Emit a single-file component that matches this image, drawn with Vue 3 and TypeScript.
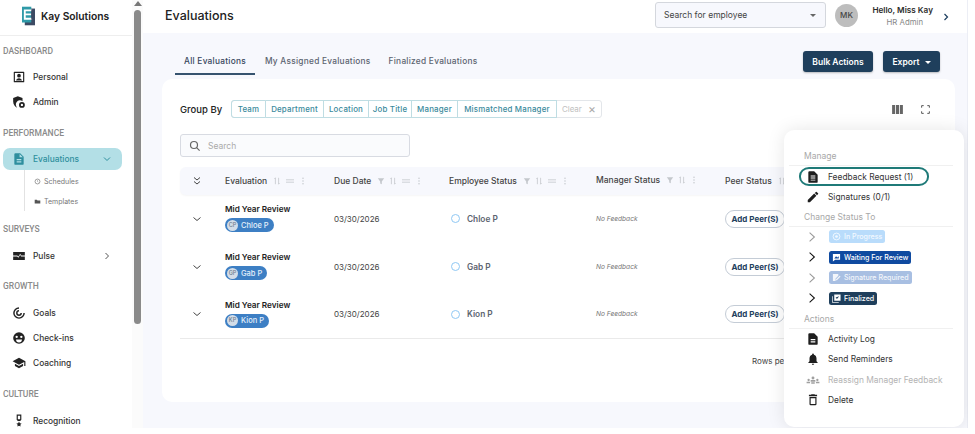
<script setup lang="ts">
const icons: Record<string, string> = {
  personal: 'M4 3h16a1 1 0 0 1 1 1v16a1 1 0 0 1-1 1H4a1 1 0 0 1-1-1V4a1 1 0 0 1 1-1zm1 2v14h14V5H5zm7 1.500a3.200 3.200 0 1 1 0 6.400 3.200 3.200 0 0 1 0-6.400zM7 18c0-2.400 2.500-4 5-4s5 1.600 5 4H7z',
  admin: 'M10 2l8 3v5.500a6.500 6.500 0 0 0-8.700 11.300C5.500 20.500 2 16.500 2 11V5l8-3zM17 12a5 5 0 1 1 0 10 5 5 0 0 1 0-10zm0 3a2 2 0 1 0 0 4 2 2 0 0 0 0-4z',
  doc: 'M14 2H6a2 2 0 0 0-2 2v16a2 2 0 0 0 2 2h12a2 2 0 0 0 2-2V8l-6-6zm2 16H8v-2h8v2zm0-4H8v-2h8v2zm-3-5V3.500L18.500 9H13z',
  pulse: 'M2 5h20v6h-6l-2-3-3 5-2-2H2V5zm0 8h7l2 2 3-5 1.500 3H22v6H2v-6z',
  goals: 'M12 2a10 10 0 1 0 10 10h-2.500A7.500 7.500 0 1 1 12 4.500V2zm0 5a5 5 0 1 0 5 5h-2.500A2.500 2.500 0 1 1 12 9.500V7z',
  checkins: 'M12 2a10 10 0 1 1 0 20 10 10 0 0 1 0-20zM8 8a2 2 0 1 0 0 4 2 2 0 0 0 0-4zm8 0a2 2 0 1 0 0 4 2 2 0 0 0 0-4zM7 14.500h10a5 5 0 0 1-10 0z',
  coaching: 'M5 13.180v4L12 21l7-3.820v-4L12 17l-7-3.820zM12 3L1 9l11 6 9-4.910V17h2V9L12 3z',
  recognition: 'M8 1h8v9l-2 2h-4l-2-2V1zm2 2v6h4V3h-4zM12 13l1.500 3 3 .4-2.200 2.100.5 3L12 20l-2.800 1.500.5-3-2.200-2.100 3-.4L12 13z',
  feedback: 'M14 2H6a2 2 0 0 0-2 2v16a2 2 0 0 0 2 2h12a2 2 0 0 0 2-2V8l-6-6zm2 16H8v-1.500h8V18zm0-3.500H8V13h8v1.500zm0-3.500H8V9.500h8V11z',
  pencil: 'M3 17.250V21h3.750L17.810 9.940l-3.750-3.750L3 17.250zM20.710 7.040a1 1 0 0 0 0-1.410l-2.340-2.340a1 1 0 0 0-1.410 0l-1.830 1.830 3.750 3.750 1.830-1.830z',
  log: 'M14 2H6a2 2 0 0 0-2 2v16a2 2 0 0 0 2 2h12a2 2 0 0 0 2-2V8l-6-6zm2 16H8v-2h8v2zm0-4H8v-2h8v2z',
  bell: 'M12 22c1.100 0 2-.9 2-2h-4a2 2 0 0 0 2 2zm6-6v-5c0-3.070-1.630-5.640-4.500-6.320V4a1.500 1.500 0 0 0-3 0v.68C7.640 5.360 6 7.920 6 11v5l-2 2v1h16v-1l-2-2z',
  people: 'M12 6a2.500 2.500 0 1 1 0 5 2.500 2.500 0 0 1 0-5zM8 12h8v3H8v-3zM4.500 10a2 2 0 1 1 0 4 2 2 0 0 1 0-4zM1 15h6v2.500H1V15zM19.500 10a2 2 0 1 1 0 4 2 2 0 0 1 0-4zM17 15h6v2.500h-6V15zM9 16h6v2.500H9V16z',
  trash: 'M6 19a2 2 0 0 0 2 2h8a2 2 0 0 0 2-2V7H6v12zm2-10h8v10H8V9zM19 3h-3.500l-1-1h-5l-1 1H5v2.500h14V3z',
}

interface NavItem {
  label: string
  icon: string
  arrow?: boolean
  active?: boolean
  subs?: string[]
}

const navGroups: { title: string; items: NavItem[] }[] = [
  { title: 'DASHBOARD', items: [{ label: 'Personal', icon: 'personal' }, { label: 'Admin', icon: 'admin' }] },
  { title: 'PERFORMANCE', items: [{ label: 'Evaluations', icon: 'doc', active: true, subs: ['Schedules', 'Templates'] }] },
  { title: 'SURVEYS', items: [{ label: 'Pulse', icon: 'pulse', arrow: true }] },
  { title: 'GROWTH', items: [{ label: 'Goals', icon: 'goals' }, { label: 'Check-ins', icon: 'checkins' }, { label: 'Coaching', icon: 'coaching' }] },
  { title: 'CULTURE', items: [{ label: 'Recognition', icon: 'recognition' }] },
]

const tabs = ['All Evaluations', 'My Assigned Evaluations', 'Finalized Evaluations']
const groupBy = ['Team', 'Department', 'Location', 'Job Title', 'Manager', 'Mismatched Manager']

const columns = [
  { label: 'Evaluation', filter: false, lines: true },
  { label: 'Due Date', filter: true, lines: true },
  { label: 'Employee Status', filter: true, lines: true },
  { label: 'Manager Status', filter: true, lines: false },
  { label: 'Peer Status', filter: false, lines: false },
]

const rows = [
  { name: 'Chloe P', initials: 'CP' },
  { name: 'Gab P', initials: 'GP' },
  { name: 'Kion P', initials: 'KP' },
]

const statuses = [
  { label: 'In Progress', cls: 'progress', dim: true },
  { label: 'Waiting For Review', cls: 'waiting', dim: false },
  { label: 'Signature Required', cls: 'signature', dim: true },
  { label: 'Finalized', cls: 'finalized', dim: false },
]

const actions = [
  { label: 'Activity Log', icon: 'log', off: false },
  { label: 'Send Reminders', icon: 'bell', off: false },
  { label: 'Reassign Manager Feedback', icon: 'people', off: true },
  { label: 'Delete', icon: 'trash', off: false },
]
</script>

<template>
  <div class="shell">
    <aside class="sidebar">
      <div class="brand">
        <svg class="logo" viewBox="0 0 14 20">
          <rect x="3" y="2" width="11" height="18" fill="#3d4a63" />
          <rect x="0" y="0" width="10" height="17" fill="#2f9aa8" />
          <path d="M2 3h9v1.800H4v2.600h6v1.800H4v2.600h7V14H2z" fill="#fff" />
          <path d="M10 3h2v11h-2z" fill="#3d4a63" />
        </svg>
        <span>Kay Solutions</span>
      </div>
      <nav class="nav">
        <section v-for="group in navGroups" :key="group.title" class="group">
          <h4>{{ group.title }}</h4>
          <template v-for="item in group.items" :key="item.label">
            <div class="nav-item" :class="{ active: item.active }">
              <svg class="nav-icon" viewBox="0 0 24 24"><path :d="icons[item.icon]" fill-rule="evenodd" /></svg>
              <span class="nav-label">{{ item.label }}</span>
              <svg v-if="item.active" class="caret" viewBox="0 0 10 10"><path d="M2 3.500l3 3 3-3" /></svg>
              <svg v-if="item.arrow" class="caret" viewBox="0 0 10 10"><path d="M3.500 2l3 3-3 3" /></svg>
            </div>
            <div v-if="item.subs" class="subs">
              <div class="sub">
                <svg viewBox="0 0 10 10"><circle cx="5" cy="5" r="3.500" fill="none" stroke="#777" /><path d="M5 3v2l1.300 1" fill="none" stroke="#777" stroke-width=".7" /></svg>
                {{ item.subs[0] }}
              </div>
              <div class="sub">
                <svg viewBox="0 0 10 10"><path d="M1 2.500h3l1 1h4v4.500H1z" fill="#555" /></svg>
                {{ item.subs[1] }}
              </div>
            </div>
          </template>
        </section>
      </nav>
    </aside>

    <div class="scrollbar">
      <i class="arrow-up"></i>
      <i class="thumb"></i>
    </div>

    <main class="main">
      <header class="topbar">
        <h1>Evaluations</h1>
        <div class="employee-select">
          <span>Search for employee</span>
          <i class="tri"></i>
        </div>
        <div class="avatar">MK</div>
        <div class="hello">
          <strong>Hello, Miss Kay</strong>
          <span>HR Admin</span>
        </div>
        <svg class="hello-arrow" viewBox="0 0 10 10"><path d="M3.500 2l3 3-3 3" /></svg>
      </header>

      <div class="content">
        <div class="tabbar">
          <div v-for="(tab, i) in tabs" :key="tab" class="tab" :class="{ current: i === 0 }">{{ tab }}</div>
          <div class="tab-actions">
            <button class="btn bulk">Bulk Actions</button>
            <button class="btn export">Export <i class="tri white"></i></button>
          </div>
        </div>

        <div class="card">
          <div class="group-row">
            <span class="group-title">Group By</span>
            <div class="group-btns">
              <span v-for="g in groupBy" :key="g" class="group-btn">{{ g }}</span>
              <span class="group-clear">Clear <b>×</b></span>
            </div>
            <div class="view-tools">
              <svg class="tool-cols" viewBox="0 0 12 10"><path d="M0 0h3.400v10H0zM4.300 0h3.400v10H4.300zM8.600 0H12v10H8.600z" /></svg>
              <svg class="tool-full" viewBox="0 0 10 10"><path d="M.7 3V.7H3M7 .7h2.300V3M9.300 7v2.300H7M3 9.300H.7V7" /></svg>
            </div>
          </div>

          <div class="search">
            <svg viewBox="0 0 12 12"><circle cx="5" cy="5" r="3.500" /><path d="M7.600 7.600l3 3" /></svg>
            <span>Search</span>
          </div>

          <div class="table">
            <div class="thead trow">
              <div class="cell-expand">
                <svg class="collapse" viewBox="0 0 10 10"><path d="M2 1.500l3 2.500 3-2.500M2 5.500l3 2.500 3-2.500" /></svg>
              </div>
              <div v-for="col in columns" :key="col.label" class="th" :class="{ raised: col.label === 'Manager Status' }">
                <span>{{ col.label }}</span>
                <svg v-if="col.filter" class="th-icon" viewBox="0 0 10 10"><path d="M1 1.500h8L6 5.500V9L4 8V5.500z" fill="#c4c7cc" /></svg>
                <svg class="th-icon" viewBox="0 0 10 10"><path d="M3 1v8M1.800 2.500L3 1M7 9V1M8.200 7.500L7 9" fill="none" stroke="#c4c7cc" /></svg>
                <svg v-if="col.lines" class="th-icon wide" viewBox="0 0 12 10"><path d="M1 3.500h10M1 6.500h10" fill="none" stroke="#c4c7cc" /></svg>
                <svg v-if="col.label !== 'Peer Status'" class="th-icon" viewBox="0 0 10 10"><circle cx="5" cy="1.500" r=".9" fill="#c4c7cc" /><circle cx="5" cy="5" r=".9" fill="#c4c7cc" /><circle cx="5" cy="8.500" r=".9" fill="#c4c7cc" /></svg>
              </div>
            </div>
            <div v-for="row in rows" :key="row.name" class="tbody trow">
              <div class="cell-expand">
                <svg class="expand" viewBox="0 0 10 10"><path d="M1.500 3.500L5 6.500l3.500-3" /></svg>
              </div>
              <div class="td eval">
                <strong>Mid Year Review</strong>
                <span class="person-chip"><i>{{ row.initials }}</i>{{ row.name }}</span>
              </div>
              <div class="td date">03/30/2026</div>
              <div class="td emp"><i class="ring"></i>{{ row.name }}</div>
              <div class="td none">No Feedback</div>
              <div class="td"><button class="add-peer">Add Peer(S)</button></div>
            </div>
          </div>
          <div class="pager">Rows per page</div>
        </div>
      </div>

      <div class="popover">
        <h5>Manage</h5>
        <div class="pop-item circled">
          <svg class="pop-icon" viewBox="0 0 24 24"><path :d="icons.feedback" fill-rule="evenodd" /></svg>
          Feedback Request (1)
        </div>
        <div class="pop-item">
          <svg class="pop-icon" viewBox="0 0 24 24"><path :d="icons.pencil" /></svg>
          Signatures (0/1)
        </div>
        <h5>Change Status To</h5>
        <div v-for="s in statuses" :key="s.label" class="status-row">
          <svg class="status-arrow" :class="{ dim: s.dim }" viewBox="0 0 10 14"><path d="M2 1.500L8 7l-6 5.500" /></svg>
          <span class="status-chip" :class="s.cls">
            <svg viewBox="0 0 10 10">
              <template v-if="s.cls === 'progress'"><circle cx="5" cy="5" r="3.800" fill="none" stroke="currentColor" /><circle cx="5" cy="5" r="1.500" fill="currentColor" /></template>
              <template v-else-if="s.cls === 'waiting'"><path d="M1 1h8v6.500H3.500L1 9.500zM2.500 6l2-2.500 1.500 1.500 1.500-1.500V6z" fill="currentColor" fill-rule="evenodd" /></template>
              <template v-else-if="s.cls === 'signature'"><path d="M1 1h6v2L4 6v3H1zM8.500 3l1 1-4 4h-1V7z" fill="currentColor" /></template>
              <template v-else><path d="M2.500 .5h7v7h-7zM4 4l1.500 1.500L8 2.500" fill="currentColor" fill-rule="evenodd" /><path d="M.5 2.500v7h7" fill="none" stroke="currentColor" stroke-width=".8" /></template>
            </svg>
            {{ s.label }}
          </span>
        </div>
        <h5>Actions</h5>
        <div v-for="a in actions" :key="a.label" class="pop-item" :class="{ off: a.off }">
          <svg class="pop-icon" viewBox="0 0 24 24"><path :d="icons[a.icon]" fill-rule="evenodd" /></svg>
          {{ a.label }}
        </div>
      </div>
    </main>
  </div>
</template>

<style>
html, body {
  margin: 0;
  background: #fff;
  overflow: hidden;
}
</style>

<style scoped>
.shell {
  display: flex;
  width: 968px;
  height: 428px;
  font-family: Inter, "Open Sans", sans-serif;
  color: #2b2b2b;
  overflow: hidden;
}

/* sidebar */
.sidebar {
  width: 132px;
  flex: none;
  background: #fff;
}
.brand {
  height: 36px;
  box-sizing: border-box;
  padding: 0 0 4px 22px;
  display: flex;
  align-items: center;
  gap: 6px;
  border-bottom: 1px solid #eee;
  font-size: 10.300px;
  font-weight: 600;
  color: #222;
}
.logo {
  width: 13px;
  height: 20px;
}
.nav {
  padding-top: 8px;
}
.group h4 {
  margin: 0;
  height: 14px;
  line-height: 14px;
  padding-left: 3px;
  font-family: Roboto, sans-serif;
  font-size: 8.500px;
  font-weight: 500;
  color: #8a8a8a;
}
.group {
  margin-bottom: 11px;
}
.group:first-child {
  margin-bottom: 12px;
}
.group:nth-child(4) {
  margin-bottom: 12px;
}
.nav-item {
  height: 25px;
  display: flex;
  align-items: center;
  padding-left: 12px;
  font-size: 8.400px;
  font-weight: 500;
  color: #333;
}
.group h4 + .nav-item {
  margin-top: 7px;
}
.group:first-child h4 + .nav-item {
  margin-top: 6px;
}
.nav-icon {
  width: 14px;
  height: 14px;
  margin-right: 7px;
  fill: #222;
}
.nav-label {
  flex: 1;
}
.caret {
  width: 10px;
  height: 10px;
  margin-right: 20px;
  fill: none;
  stroke: #555;
}
.nav-item.active {
  height: 22px;
  margin: 4px 10px 0 3px;
  padding-left: 9px;
  background: #b3dfe6;
  border-radius: 7px;
  color: #2f8f9e;
}
.group h4 + .nav-item.active {
  margin-top: 8px;
}
.nav-item.active .nav-icon {
  fill: #2f8f9e;
}
.nav-item.active .caret {
  stroke: #2f8f9e;
  margin-right: 10px;
}
.subs {
  margin-left: 24px;
  padding: 2px 0 0 9px;
  border-left: 1px solid #e2e2e2;
}
.sub {
  height: 19.500px;
  display: flex;
  align-items: center;
  gap: 3px;
  font-size: 7px;
  color: #777;
}
.sub svg {
  width: 7px;
  height: 7px;
}

/* fake scrollbar */
.scrollbar {
  width: 11px;
  flex: none;
  display: flex;
  flex-direction: column;
  align-items: center;
  background: #fbfbfb;
}
.arrow-up {
  margin-top: 1px;
  border: 4px solid transparent;
  border-top: 0;
  border-bottom: 5px solid #777;
}
.thumb {
  width: 7px;
  height: 314px;
  margin-top: 4px;
  background: #8a8a8a;
  border-radius: 4px;
}

/* main */
.main {
  position: relative;
  flex: 1;
  display: flex;
  flex-direction: column;
  background: #f7f8fd;
  min-width: 0;
  border-right: 1px solid #eceef5;
}
.topbar {
  height: 33px;
  flex: none;
  display: flex;
  align-items: center;
  padding-left: 22px;
  background: #fff;
}
.topbar h1 {
  flex: 1;
  margin: 0 0 3px;
  font-size: 12.500px;
  font-weight: 500;
  color: #222;
}
.employee-select {
  width: 171px;
  height: 26px;
  box-sizing: border-box;
  display: flex;
  align-items: center;
  justify-content: space-between;
  padding: 0 9px 0 8px;
  margin-bottom: 3px;
  background: #f7f8fd;
  border: 1px solid #d4d7dd;
  border-radius: 3px;
  font-size: 8.500px;
  color: #444;
}
.tri {
  border: 3px solid transparent;
  border-top: 3px solid #666;
  border-bottom: 0;
}
.tri.white {
  display: inline-block;
  border-top-color: #fff;
  margin: 0 0 1px 3px;
}
.avatar {
  width: 23px;
  height: 23px;
  margin: 0 11px 3px 9px;
  border-radius: 50%;
  background: #bdbdbd;
  display: flex;
  align-items: center;
  justify-content: center;
  font-size: 8px;
  font-weight: 500;
  color: #444;
}
.hello {
  width: 64px;
  display: flex;
  flex-direction: column;
  align-items: flex-end;
  margin-bottom: 1px;
  text-align: right;
}
.hello strong {
  font-size: 8.200px;
  font-weight: 600;
  line-height: 12px;
  white-space: nowrap;
}
.hello span {
  font-size: 7.800px;
  line-height: 12px;
  color: #888;
  margin-right: 10px;
}
.hello-arrow {
  width: 10px;
  height: 10px;
  margin: 0 16px 0 8px;
  fill: none;
  stroke: #1c3f5f;
  stroke-width: 1.200;
}

.content {
  flex: 1;
  padding: 0 12px 0 19px;
}
.tabbar {
  height: 46px;
  box-sizing: border-box;
  padding-bottom: 4px;
  display: flex;
  align-items: flex-end;
}
.tab {
  height: 29px;
  box-sizing: border-box;
  padding: 10px 9px 0;
  font-size: 8.300px;
  font-weight: 500;
  letter-spacing: .27px;
  color: #5c6470;
  white-space: nowrap;
}
.tab.current {
  margin: 0 1px 0 13px;
  color: #36465c;
  border-bottom: 2px solid #36536f;
}
.tab-actions {
  margin-left: auto;
  align-self: flex-start;
  display: flex;
  gap: 10px;
  padding: 18px 15px 0 0;
}
.btn {
  height: 21px;
  padding: 0;
  border: 0;
  border-radius: 3px;
  background: #1f3f5c;
  color: #fff;
  font-family: inherit;
  font-size: 8.500px;
  font-weight: 600;
  box-shadow: 0 1px 2px rgba(0, 0, 0, .25);
}
.bulk {
  width: 70px;
}
.export {
  width: 57px;
}

.card {
  height: 323px;
  box-sizing: border-box;
  padding: 21px 18px 0;
  background: #fff;
  border-radius: 10px;
}
.group-row {
  display: flex;
  align-items: center;
  height: 18px;
}
.group-title {
  width: 51px;
  font-size: 9.500px;
  font-weight: 500;
  color: #222;
}
.group-btns {
  display: grid;
  grid-template-columns: 34px 58px 45px 43px 46px 99px 1fr;
  width: 371px;
  height: 18px;
  box-sizing: border-box;
  border: 1px solid #e3e6ea;
  border-radius: 3px;
}
.group-btn {
  display: flex;
  align-items: center;
  justify-content: center;
  margin: -1px 0;
  border: 1px solid #bfdde3;
  border-left: 0;
  font-size: 7.900px;
  font-weight: 500;
  letter-spacing: .2px;
  color: #3a8a9c;
  white-space: nowrap;
}
.group-btn:first-child {
  margin-left: -1px;
  border-left: 1px solid #bfdde3;
  border-radius: 3px 0 0 3px;
}
.group-clear {
  display: flex;
  align-items: center;
  justify-content: space-between;
  padding: 0 5px;
  font-size: 7.900px;
  color: #c0c0c0;
}
.group-clear b {
  font-weight: 400;
  font-size: 12px;
  line-height: 12px;
  color: #aaa;
}
.view-tools {
  margin-left: auto;
  display: flex;
  align-items: center;
  gap: 18px;
  padding-right: 7px;
}
.tool-cols {
  width: 11px;
  height: 9px;
  fill: #666;
}
.tool-full {
  width: 9px;
  height: 9px;
  fill: none;
  stroke: #555;
  stroke-width: 1.100;
}
.search {
  width: 230px;
  height: 23px;
  box-sizing: border-box;
  margin-top: 16px;
  padding-left: 8px;
  display: flex;
  align-items: center;
  gap: 7px;
  background: #fafbfd;
  border: 1px solid #d8dbe2;
  border-radius: 3px;
  font-size: 8.500px;
  color: #aaa;
}
.search svg {
  width: 12px;
  height: 12px;
  fill: none;
  stroke: #666;
  stroke-width: 1.200;
}

.table {
  margin-top: 10px;
  border-bottom: 1px solid #eaeaea;
}
.trow {
  display: grid;
  grid-template-columns: 45px 109px 115px 147px 129px 1fr;
  align-items: center;
}
.thead {
  height: 28px;
  background: #f7f8fd;
  border-radius: 6px;
  box-shadow: 0 1px 2px rgba(0, 0, 0, .04);
}
.tbody {
  height: 47.700px;
}
.cell-expand {
  display: flex;
  justify-content: center;
  padding-right: 11px;
}
.collapse, .expand {
  width: 10px;
  height: 10px;
  fill: none;
  stroke: #444;
}
.th {
  display: flex;
  align-items: center;
  gap: 4px;
  font-size: 8.500px;
  font-weight: 500;
  color: #444;
  white-space: nowrap;
}
.th.raised {
  margin-top: -3px;
}
.th span {
  margin-right: 2px;
}
.th-icon {
  width: 8px;
  height: 8px;
  flex: none;
}
.th-icon.wide {
  width: 10px;
}
.td {
  font-size: 8px;
  color: #444;
  white-space: nowrap;
}
.eval {
  display: flex;
  flex-direction: column;
  align-items: flex-start;
  gap: 4px;
  margin-top: -1px;
}
.eval strong {
  font-size: 8.200px;
  font-weight: 600;
  color: #222;
}
.person-chip {
  display: inline-flex;
  align-items: center;
  height: 14px;
  padding: 0 5px 0 2px;
  border-radius: 7px;
  background: #3d7fc4;
  color: #e4f0fb;
  font-size: 7.500px;
  font-weight: 500;
}
.person-chip i {
  width: 11px;
  height: 11px;
  margin-right: 3px;
  border-radius: 50%;
  background: #d3dde8;
  color: #6d7d8d;
  font-size: 5.500px;
  font-style: normal;
  text-align: center;
  line-height: 11px;
}
.date {
  font-size: 8px;
}
.emp {
  display: flex;
  align-items: center;
  gap: 7px;
  padding-left: 2px;
  font-weight: 600;
  font-size: 8.300px;
  color: #5c6470;
}
.ring {
  width: 9px;
  height: 9px;
  box-sizing: border-box;
  border: 1.200px solid #8fc8f4;
  border-radius: 50%;
}
.none {
  font-size: 6.600px;
  font-style: italic;
  color: #777;
}
.add-peer {
  width: 60px;
  height: 18px;
  padding: 0;
  background: #fff;
  border: 1px solid #c4ccd6;
  border-radius: 9px;
  color: #24405e;
  font-family: inherit;
  font-size: 8px;
  font-weight: 700;
  white-space: nowrap;
}
.pager {
  margin: 17px 0 0 572px;
  font-size: 8px;
  color: #444;
  white-space: nowrap;
}

/* menu over the table */
.popover {
  position: absolute;
  top: 130px;
  left: 641px;
  width: 180px;
  height: 297px;
  box-sizing: border-box;
  padding: 20px 11px 0 5px;
  background: #fff;
  border-radius: 10px;
  box-shadow: 0 0 18px rgba(0, 0, 0, .1);
}
.popover h5 {
  margin: 0;
  height: 15px;
  line-height: 12px;
  padding-left: 15px;
  border-bottom: 1.500px solid #f0f0f0;
  font-size: 8.500px;
  font-weight: 400;
  color: #a8a8a8;
}
.pop-item {
  height: 20.500px;
  display: flex;
  align-items: center;
  gap: 8px;
  padding-left: 17px;
  font-size: 8.400px;
  color: #333;
  white-space: nowrap;
}
.pop-item.off {
  color: #b4b4b4;
}
.pop-item.off .pop-icon {
  fill: #a0a0a0;
}
.pop-icon {
  width: 14px;
  height: 14px;
  fill: #1e1e1e;
  flex: none;
}
.circled {
  width: 130px;
  height: 19px;
  box-sizing: border-box;
  margin: 1px 0 1px 10px;
  padding-left: 5px;
  border: 2px solid #1f7a78;
  border-radius: 10px / 9px;
}
.popover .pop-item + h5 {
  margin-top: 3px;
}
.status-row {
  height: 20.500px;
  display: flex;
  align-items: center;
  padding-left: 19px;
}
.status-row + h5 {
  margin-top: 4px;
}
.status-arrow {
  width: 8px;
  height: 12px;
  margin-right: 13px;
  fill: none;
  stroke: #111;
  stroke-width: 1.300;
}
.status-arrow.dim {
  stroke: #999;
}
.status-chip {
  display: inline-flex;
  align-items: center;
  gap: 3px;
  height: 13px;
  padding: 0 3px;
  border-radius: 2.500px;
  font-size: 7.100px;
  font-weight: 500;
  white-space: nowrap;
}
.status-chip svg {
  width: 9px;
  height: 9px;
}
.status-chip.progress {
  background: #b9dcfb;
  color: #f3f9ff;
}
.status-chip.waiting {
  background: #0f4aa0;
  color: #fff;
}
.status-chip.signature {
  background: #a8bfe2;
  color: #f3f6fb;
}
.status-chip.finalized {
  background: #1f3f5c;
  color: #fff;
}
</style>
